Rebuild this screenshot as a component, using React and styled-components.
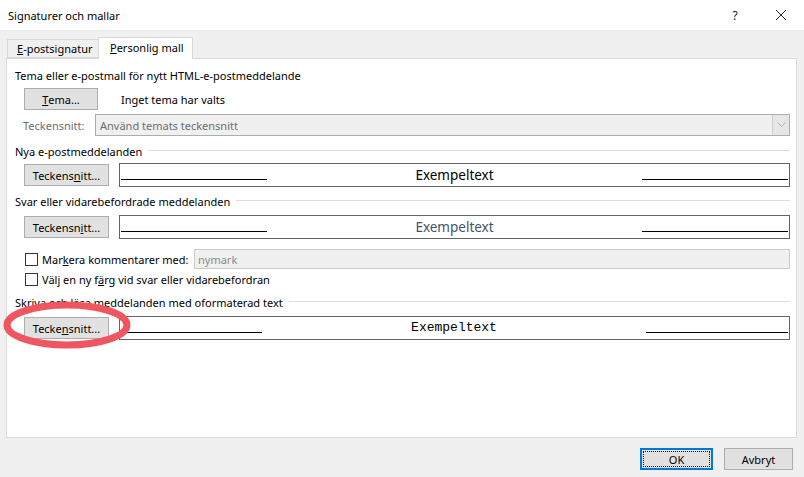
import React from 'react';
import styled, { createGlobalStyle } from 'styled-components';

const GlobalStyle = createGlobalStyle`
  html, body {
    margin: 0;
    padding: 0;
    background: #f0f0f0;
  }
  body {
    font-family: 'Noto Sans', 'Open Sans', sans-serif;
    font-size: 11px;
    color: #000;
  }
`;

const App = () => {
  return (
    <Window>
      <GlobalStyle />
      <TitleBar>
        <Title>Signaturer och mallar</Title>
        <TitleButtons>
          <TitleGlyph>?</TitleGlyph>
          <TitleGlyph>
            <svg width="12" height="12" viewBox="0 0 12 12">
              <path d="M1 1 L11 11 M11 1 L1 11" stroke="#222" strokeWidth="1" fill="none" />
            </svg>
          </TitleGlyph>
        </TitleButtons>
      </TitleBar>

      <Body>
        <TabStrip>
          <Tab>
            <u>E</u>-postsignatur
          </Tab>
          <Tab $active>
            <u>P</u>ersonlig mall
          </Tab>
        </TabStrip>

        <Panel>
          <Heading $noLine>Tema eller e-postmall för nytt HTML-e-postmeddelande</Heading>
          <Row $top={5}>
            <Button $width={74}>
              <u>T</u>ema...
            </Button>
            <Note>Inget tema har valts</Note>
          </Row>
          <Row $top={4}>
            <DimLabel>Teckensnitt:</DimLabel>
            <Combo>
              <span>Använd temats teckensnitt</span>
              <ComboArrow>
                <svg width="9" height="6" viewBox="0 0 9 6">
                  <path d="M0.5 0.5 L4.5 4.5 L8.5 0.5" stroke="#b0b0b0" fill="none" />
                </svg>
              </ComboArrow>
            </Combo>
          </Row>

          <Heading $top={7}>Nya e-postmeddelanden</Heading>
          <Row $top={4}>
            <Button $width={85}>
              Teckens<u>n</u>itt...
            </Button>
            <Preview>
              <Rule $width={146} />
              <Sample>Exempeltext</Sample>
              <Rule $width={146} />
            </Preview>
          </Row>

          <Heading $top={6}>Svar eller vidarebefordrade meddelanden</Heading>
          <Row $top={6}>
            <Button $width={85}>
              Teckensn<u>i</u>tt...
            </Button>
            <Preview>
              <Rule $width={146} />
              <Sample $color="#44546a">Exempeltext</Sample>
              <Rule $width={146} />
            </Preview>
          </Row>

          <Row $top={10}>
            <Check />
            <CheckLabel $width={152}>
              Mar<u>k</u>era kommentarer med:
            </CheckLabel>
            <TextInput>nymark</TextInput>
          </Row>
          <Row $top={3}>
            <Check />
            <CheckLabel>
              Välj en ny f<u>ä</u>rg vid svar eller vidarebefordran
            </CheckLabel>
          </Row>

          <Heading $top={7}>Skriva och läsa meddelanden med oformaterad text</Heading>
          <Row $top={6}>
            <Marked>
              <Button $width={85}>
                Tecke<u>n</u>snitt...
              </Button>
              <Circle width="134" height="52" viewBox="0 0 134 52">
                <ellipse cx="67" cy="26" rx="60" ry="20" fill="none" stroke="#ef5660" strokeWidth="7" />
              </Circle>
            </Marked>
            <Preview>
              <Rule $width={141} />
              <Sample $mono>Exempeltext</Sample>
              <Rule $width={142} />
            </Preview>
          </Row>
        </Panel>

        <Footer>
          <DialogButton $default>
            <FocusRing>OK</FocusRing>
          </DialogButton>
          <DialogButton>Avbryt</DialogButton>
        </Footer>
      </Body>
    </Window>
  );
};

const Window = styled.div`
  width: 804px;
  height: 477px;
  display: flex;
  flex-direction: column;
  overflow: hidden;
`;

const TitleBar = styled.div`
  height: 30px;
  flex: none;
  background: #ffffff;
  display: flex;
  align-items: center;
  justify-content: space-between;
  padding-left: 8px;
`;

const Title = styled.div`
  font-size: 11px;
  color: #000;
`;

const TitleButtons = styled.div`
  display: flex;
  align-items: center;
  height: 100%;
`;

const TitleGlyph = styled.div`
  width: 46px;
  height: 100%;
  display: flex;
  align-items: center;
  justify-content: center;
  font-size: 12px;
  color: #222;
`;

const Body = styled.div`
  flex: 1;
  display: flex;
  flex-direction: column;
  padding: 7px 7px 0 6px;
`;

const TabStrip = styled.div`
  display: flex;
  align-items: flex-end;
  height: 21px;
  padding-left: 1px;
  position: relative;
  z-index: 1;
`;

const Tab = styled.div`
  height: ${(p) => (p.$active ? 22 : 19)}px;
  width: ${(p) => (p.$active ? 95 : 92)}px;
  padding-left: ${(p) => (p.$active ? 11 : 9)}px;
  margin-bottom: ${(p) => (p.$active ? -1 : 0)}px;
  margin-left: ${(p) => (p.$active ? -1 : 0)}px;
  display: flex;
  align-items: center;
  background: ${(p) => (p.$active ? '#ffffff' : '#f0f0f0')};
  border: 1px solid #d9d9d9;
  border-bottom: ${(p) => (p.$active ? 'none' : '1px solid #d9d9d9')};
  box-sizing: border-box;
  white-space: nowrap;
  padding-bottom: ${(p) => (p.$active ? 2 : 0)}px;
`;

const Panel = styled.div`
  height: 380px;
  box-sizing: border-box;
  background: #ffffff;
  border: 1px solid #d9d9d9;
  padding: 8px 6px 0 8px;
  display: flex;
  flex-direction: column;
`;

const Heading = styled.div`
  display: flex;
  align-items: center;
  height: 16px;
  margin-top: ${(p) => p.$top || 0}px;
  white-space: nowrap;

  &::after {
    content: '';
    display: ${(p) => (p.$noLine ? 'none' : 'block')};
    flex: 1;
    height: 1px;
    background: #dcdcdc;
    margin-left: 6px;
    margin-top: -1px;
  }
`;

const Row = styled.div`
  display: flex;
  align-items: center;
  padding-left: 9px;
  margin-top: ${(p) => p.$top || 0}px;
`;

const Button = styled.div`
  width: ${(p) => p.$width}px;
  height: 22px;
  box-sizing: border-box;
  flex: none;
  background: #e1e1e1;
  border: 1px solid #adadad;
  display: flex;
  align-items: center;
  justify-content: center;
  white-space: nowrap;
`;

const Note = styled.div`
  margin-left: 23px;
`;

const DimLabel = styled.div`
  width: 72px;
  color: #6d6d6d;
  margin-left: -1px;
`;

const Combo = styled.div`
  flex: 1;
  height: 22px;
  box-sizing: border-box;
  background: #f0f0f0;
  border: 1px solid #adadad;
  display: flex;
  align-items: center;
  justify-content: space-between;
  padding-left: 4px;
  color: #6d6d6d;
`;

const ComboArrow = styled.div`
  width: 17px;
  height: 100%;
  box-sizing: border-box;
  border-left: 1px solid #cfcfcf;
  background: #e6e6e6;
  display: flex;
  align-items: center;
  justify-content: center;
`;

const Preview = styled.div`
  flex: 1;
  height: 24px;
  box-sizing: border-box;
  margin-left: 10px;
  border: 1px solid #646464;
  display: flex;
  align-items: flex-end;
  justify-content: space-between;
  padding: 0 1px 6px 1px;
`;

const Rule = styled.div`
  width: ${(p) => p.$width}px;
  height: 1px;
  background: #000;
`;

const Sample = styled.div`
  font-family: ${(p) => (p.$mono ? "'Liberation Mono', monospace" : "'Noto Sans', sans-serif")};
  font-size: ${(p) => (p.$mono ? 13 : 13.5)}px;
  color: ${(p) => p.$color || '#000'};
  line-height: 16px;
  margin-bottom: -3px;
`;

const Check = styled.div`
  width: 13px;
  height: 13px;
  box-sizing: border-box;
  border: 1px solid #333333;
  background: #fff;
  margin-left: 1px;
  flex: none;
`;

const CheckLabel = styled.div`
  margin-left: 4px;
  width: ${(p) => (p.$width ? `${p.$width}px` : 'auto')};
  white-space: nowrap;
`;

const TextInput = styled.div`
  flex: 1;
  height: 20px;
  box-sizing: border-box;
  background: #f0f0f0;
  border: 1px solid #cccccc;
  padding-left: 3px;
  display: flex;
  align-items: center;
  color: #8a8a8a;
`;

const Marked = styled.div`
  position: relative;
  display: flex;
`;

const Circle = styled.svg`
  position: absolute;
  left: -24px;
  top: -18px;
  pointer-events: none;
`;

const Footer = styled.div`
  display: flex;
  justify-content: flex-end;
  gap: 11px;
  padding-top: 10px;
  padding-right: 4px;
`;

const DialogButton = styled.div`
  width: ${(p) => (p.$default ? 73 : 69)}px;
  height: 22px;
  box-sizing: border-box;
  background: #e1e1e1;
  border: ${(p) => (p.$default ? '2px solid #0078d7' : '1px solid #adadad')};
  display: flex;
  align-items: center;
  justify-content: center;
`;

const FocusRing = styled.div`
  align-self: stretch;
  flex: 1;
  margin: 1px;
  border: 1px dotted #111;
  display: flex;
  align-items: center;
  justify-content: center;
`;

export default App;
